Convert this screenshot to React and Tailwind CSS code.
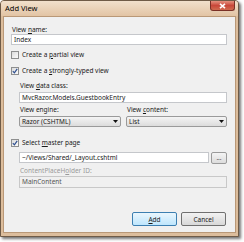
import React from "react";

function Check({ checked }) {
  return (
    <div className="w-[8px] h-[8px] border border-[#8e8f8f] bg-gradient-to-br from-[#dcdcdc] to-[#fbfbfb] flex items-center justify-center shrink-0">
      {checked && (
        <svg width="6" height="6" viewBox="0 0 6 6">
          <path d="M0.8 3.2 L2.4 4.8 L5.2 0.8" stroke="#2f4f8f" strokeWidth="1.2" fill="none" />
        </svg>
      )}
    </div>
  );
}

function Arrow() {
  return (
    <svg width="5" height="3" viewBox="0 0 5 3" className="shrink-0">
      <path d="M0 0 L5 0 L2.5 3 Z" fill="#111" />
    </svg>
  );
}

export default function App() {
  return (
    <div className="relative w-[244px] h-[242px] bg-white overflow-hidden font-['Noto_Sans',sans-serif] text-[6.5px] text-[#1a1a1a]">
      <div className="absolute left-0 top-0 w-[239px] h-[237px] rounded-t-[4px] border border-[#6f5b47] bg-[#dcbd9c] shadow-[2px_2px_3px_rgba(0,0,0,0.55)] flex flex-col">
        <div className="relative h-[15px] flex items-center pl-[4px] rounded-t-[3px] bg-gradient-to-b from-[#f1e0cc] to-[#e2c4a4]">
          <span className="text-[7.5px] leading-[9px] text-black">Add View</span>
          <div className="absolute right-[3px] top-0 w-[25px] h-[10px] rounded-b-[3px] border border-t-0 border-[#7a3026] bg-gradient-to-b from-[#e4907f] via-[#c8473a] to-[#d06a4f] flex items-center justify-center">
            <svg width="7" height="6" viewBox="0 0 7 6">
              <path d="M1 0.8 L6 5.2 M6 0.8 L1 5.2" stroke="#fff" strokeWidth="1.6" />
            </svg>
          </div>
        </div>
        <div className="flex-1 mx-[2px] mb-[3px] border border-[#b99877] bg-[#f0f0f0] flex flex-col pl-[7px] pr-[8px] pt-[8px] pb-[6px]">
          <div className="h-[9px] leading-[9px] pl-[1px]">View <u>n</u>ame:</div>
          <div className="h-[11px] border border-[#c5c7cb] bg-white leading-[9px] pl-[2px]">Index</div>
          <div className="mt-[5px] h-[9px] flex items-center gap-[3px]">
            <Check />
            <span className="leading-[9px]">Create a <u>p</u>artial view</span>
          </div>
          <div className="mt-[7px] h-[9px] flex items-center gap-[3px]">
            <Check checked />
            <span className="leading-[9px]">Create a <u>s</u>trongly-typed view</span>
          </div>
          <div className="pl-[8px] flex flex-col">
            <div className="mt-[6px] h-[9px] leading-[9px] pl-[1px]">View <u>d</u>ata class:</div>
            <div className="mt-[2px] h-[11px] border border-[#c5c7cb] bg-white leading-[9px] pl-[2px]">MvcRazor.Models.GuestbookEntry</div>
            <div className="mt-[2px] flex gap-[5px]">
              <div className="flex-1 flex flex-col">
                <div className="h-[9px] leading-[9px] pl-[1px]">View engine:</div>
                <div className="mt-[2px] h-[11px] rounded-[2px] border border-[#9a9a9a] bg-gradient-to-b from-[#f4f4f4] to-[#dcdcdc] flex items-center justify-between pl-[2px] pr-[2px]">
                  <span className="leading-[9px]">Razor (CSHTML)</span>
                  <Arrow />
                </div>
              </div>
              <div className="w-[101px] flex flex-col">
                <div className="h-[9px] leading-[9px] pl-[1px]">View <u>c</u>ontent:</div>
                <div className="mt-[2px] h-[11px] rounded-[2px] border border-[#9a9a9a] bg-gradient-to-b from-[#f4f4f4] to-[#dcdcdc] flex items-center justify-between pl-[2px] pr-[2px]">
                  <span className="leading-[9px]">List</span>
                  <Arrow />
                </div>
              </div>
            </div>
          </div>
          <div className="mt-[11px] h-[9px] flex items-center gap-[3px]">
            <Check checked />
            <span className="leading-[9px]">Select <u>m</u>aster page</span>
          </div>
          <div className="pl-[8px] flex flex-col">
            <div className="mt-[5px] flex gap-[2px]">
              <div className="flex-1 h-[11px] border border-[#c5c7cb] bg-white leading-[9px] pl-[2px]">~/Views/Shared/_Layout.cshtml</div>
              <div className="w-[16px] h-[12px] rounded-[2px] border border-[#9a9a9a] bg-gradient-to-b from-[#f4f4f4] to-[#dcdcdc] flex items-center justify-center leading-[6px] text-[#555]">...</div>
            </div>
            <div className="mt-[2px] h-[9px] leading-[9px] pl-[1px] text-[#9a9a9a]">ContentPlaceH<u>o</u>lder ID:</div>
            <div className="mt-[1px] h-[12px] border border-[#c8c8c8] bg-[#f0f0f0] leading-[10px] pl-[2px] text-[#555]">MainContent</div>
          </div>
          <div className="mt-auto flex justify-end gap-[4px] pr-[1px]">
            <div className="w-[45px] h-[14px] rounded-[2px] border border-[#3c7fb1] bg-gradient-to-b from-[#eaf6fd] to-[#bee6fd] flex items-center justify-center leading-[9px]"><span><u>A</u>dd</span></div>
            <div className="w-[45px] h-[14px] rounded-[2px] border border-[#707070] bg-gradient-to-b from-[#f2f2f2] to-[#d8d8d8] flex items-center justify-center leading-[9px]">Cancel</div>
          </div>
        </div>
      </div>
    </div>
  );
}
